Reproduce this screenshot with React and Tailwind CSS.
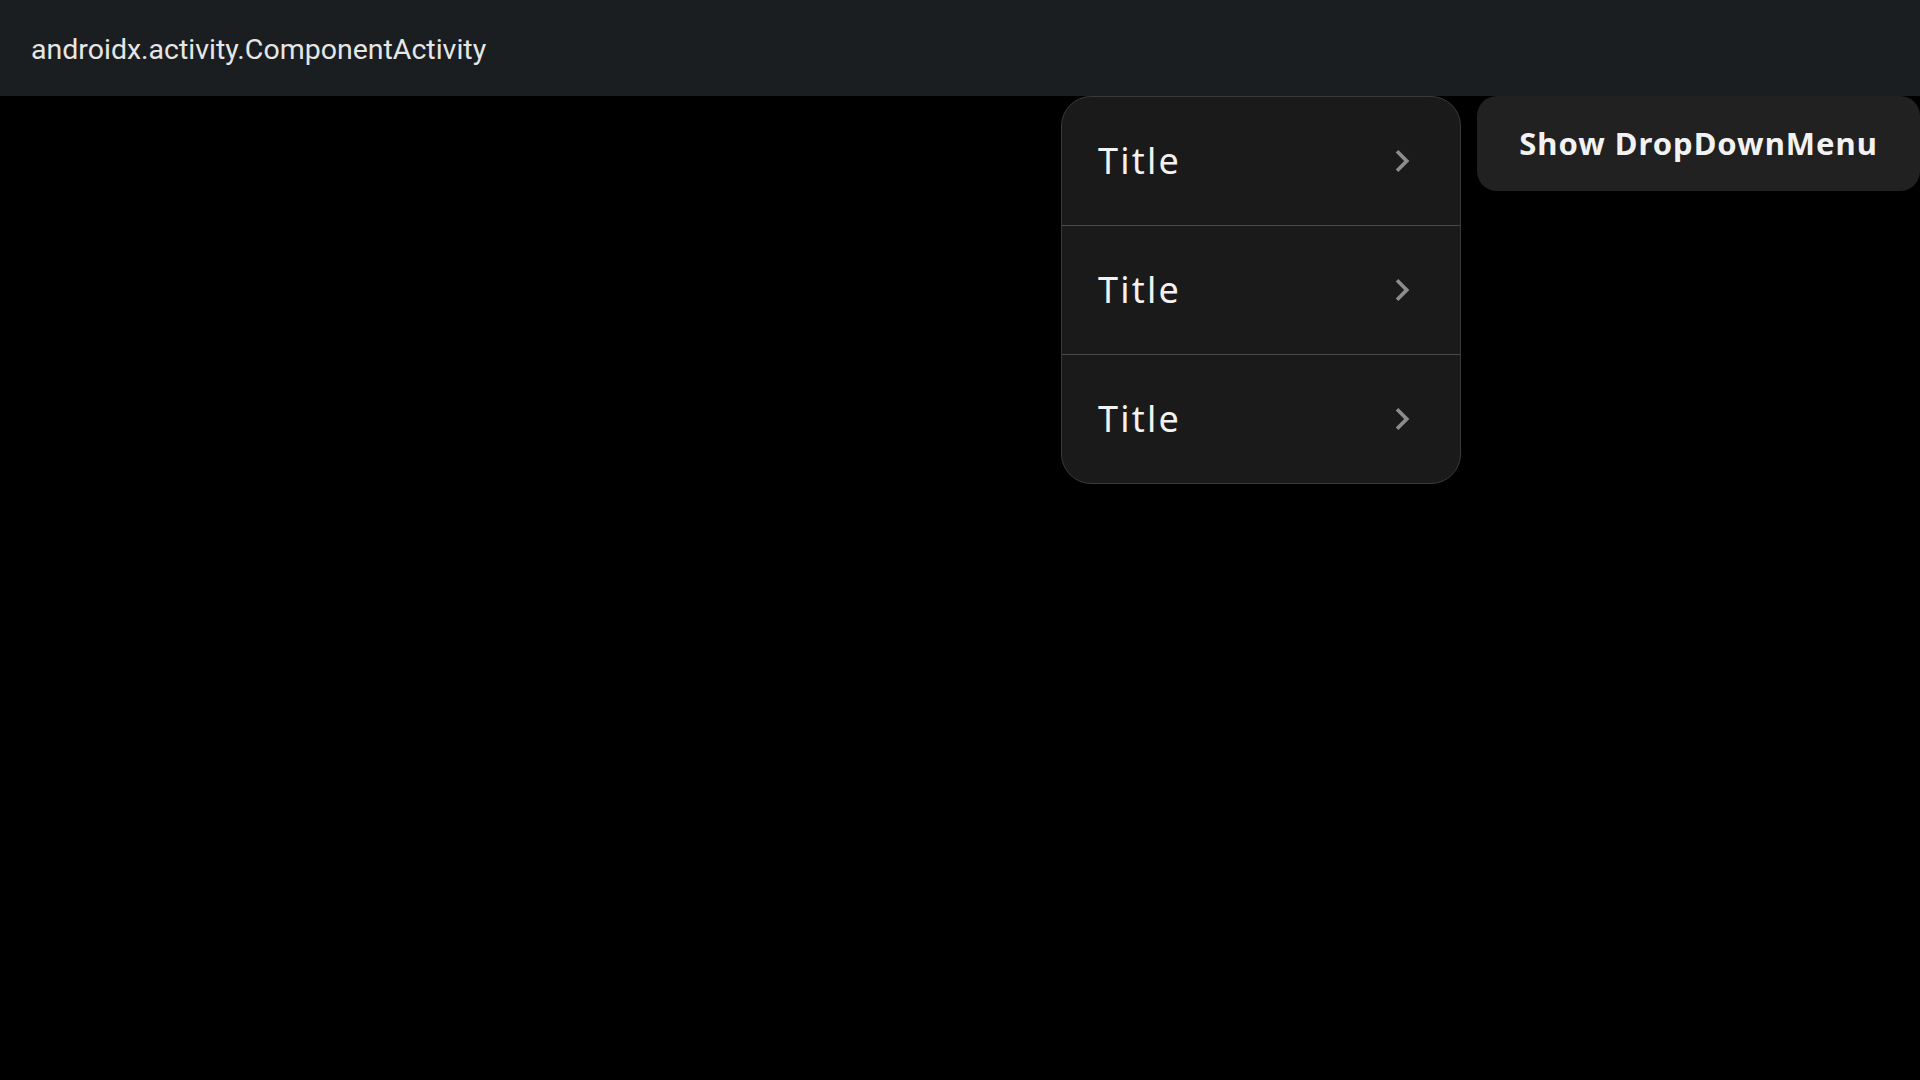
import React from 'react';

const items = ['Title', 'Title', 'Title'];

function Chevron() {
  return (
    <svg width="44" height="44" viewBox="0 0 24 24" fill="#8c8c8c" className="shrink-0">
      <path d="M10 6L8.59 7.41 13.17 12l-4.58 4.59L10 18l6-6z" />
    </svg>
  );
}

export default function App() {
  return (
    <div className="min-h-screen w-full bg-black" style={{ fontFamily: '"Noto Sans", sans-serif' }}>
      {/* app bar */}
      <header className="h-[96px] bg-[#1b1e21] flex items-center pl-[31px]">
        <span className="mt-[5px] text-[28.5px] text-[#e6e6e6]" style={{ fontFamily: 'Roboto, sans-serif' }}>
          androidx.activity.ComponentActivity
        </span>
      </header>

      <div className="flex justify-end items-start gap-4">
        {/* dropdown menu */}
        <div className="w-[400px] bg-[#1a1a1a] border border-[#3a3a3a] rounded-[30px] overflow-hidden">
          {items.map((t, i) => (
            <div
              key={i}
              className={`flex items-center justify-between pl-[36px] pr-[36px] ${i > 0 ? 'h-[129px] border-t border-[#4a4a4a]' : 'h-[128px]'}`}
            >
              <span className="text-[36px] text-[#f2f2f2] tracking-[2.2px]">{t}</span>
              <Chevron />
            </div>
          ))}
        </div>

        {/* button */}
        <button className="w-[443px] h-[95px] bg-[#212121] rounded-[20px] text-[31px] font-bold tracking-[1px] text-[#f2f2f2] text-center">
          Show DropDownMenu
        </button>
      </div>
    </div>
  );
}
